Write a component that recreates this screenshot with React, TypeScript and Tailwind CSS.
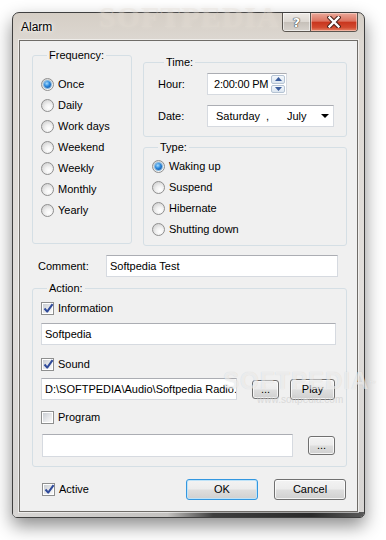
import React from 'react';

const Radio: React.FC<{ label: string; checked?: boolean }> = ({ label, checked }) => (
  <div className="flex h-[21px] items-center gap-[4px]">
    <span className="flex h-[13px] w-[13px] shrink-0 items-center justify-center rounded-full border border-[#8f8f8f] bg-[radial-gradient(circle_at_62%_68%,#ffffff_0%,#f2f2f2_35%,#c6c6c6_100%)]">
      {checked && (
        <span className="h-[7px] w-[7px] rounded-full bg-[radial-gradient(circle_at_40%_35%,#a6dcff_0%,#2b89dd_45%,#0a3e8a_100%)] shadow-[0_0_0_1px_#86b8de]" />
      )}
    </span>
    <span>{label}</span>
  </div>
);

const CheckBox: React.FC<{ label: string; checked?: boolean }> = ({ label, checked }) => (
  <div className="flex h-[20px] items-center gap-[4px]">
    <span className="relative h-[13px] w-[13px] shrink-0 border border-[#8e8f8f] bg-white p-[1px]">
      <span className="block h-full w-full bg-[linear-gradient(135deg,#c9cdd3_0%,#e9eaec_60%,#f8f8f8_100%)]" />
      {checked && (
        <svg className="absolute left-[1px] top-[0px]" width="11" height="11" viewBox="0 0 11 11">
          <path d="M1.5 5.5 L4.2 8.6 L9.6 1.2" fill="none" stroke="#2f4a9a" strokeWidth="2" strokeLinejoin="round" />
        </svg>
      )}
    </span>
    <span>{label}</span>
  </div>
);

const TextBox: React.FC<{ className?: string; value?: string }> = ({ className = '', value }) => (
  <div
    className={`flex items-center overflow-hidden whitespace-nowrap border border-[#d6dae0] border-t-[#abadb3] bg-white pl-[3px] ${className}`}
  >
    {value}
  </div>
);

const Button: React.FC<{ className?: string; children: React.ReactNode; focused?: boolean }> = ({
  className = '',
  children,
  focused,
}) => (
  <div
    className={`flex items-center justify-center rounded-[3px] border bg-[linear-gradient(to_bottom,#f3f3f3_0%,#ececec_48%,#dedede_52%,#d0d0d0_100%)] ${
      focused
        ? 'border-[#3397e0] shadow-[inset_0_0_0_1px_#bfe3f8]'
        : 'border-[#707070] shadow-[inset_0_0_0_1px_rgba(255,255,255,0.75)]'
    } ${className}`}
  >
    {children}
  </div>
);

const GroupBox: React.FC<{ title: string; className?: string; children: React.ReactNode }> = ({
  title,
  className = '',
  children,
}) => (
  <fieldset className={`rounded-[3px] border border-[#d5dfe5] ${className}`}>
    <legend className="ml-[6px] px-[2px] leading-[13px]">{title}</legend>
    {children}
  </fieldset>
);

const SpinArrow: React.FC<{ up?: boolean }> = ({ up }) => (
  <span className="flex flex-1 items-center justify-center rounded-[2px] border border-[#b5c3d3] bg-[linear-gradient(to_bottom,#f4f8fc,#dbe5f0)]">
    <svg width="7" height="4" viewBox="0 0 7 4">
      <path d={up ? 'M0 4 L3.5 0 L7 4 Z' : 'M0 0 L3.5 4 L7 0 Z'} fill="#3b5d9c" />
    </svg>
  </span>
);

export default function App() {
  return (
    <div className="min-h-[540px] bg-white p-[12px] font-['Liberation_Sans',Arial,sans-serif] text-[11px] leading-[13px] text-black">
      {/* window frame */}
      <div className="relative flex h-[506px] w-[353px] flex-col rounded-t-[7px] rounded-b-[5px] border border-[#3f3f3f] bg-[linear-gradient(to_bottom,#d5cec5_0px,#ddd8d2_30px,#e1dedb_55%,#d6d4d2_100%)] shadow-[0_8px_18px_rgba(0,0,0,0.45)]">
        {/* watermark in caption */}
        <div className="pointer-events-none absolute left-[86px] top-[-3px] font-['Liberation_Serif',serif] text-[30px] font-bold tracking-[1px] text-[#e4ddd4] opacity-40 [text-shadow:0_0_5px_#ebe5de]">
          SOFTPEDIA
        </div>

        {/* caption */}
        <div className="relative flex h-[27px] items-start pl-[8px] pr-[6px]">
          <span className="mt-[7px] text-[12px] leading-[14px] [text-shadow:0_0_6px_#fff,0_0_3px_#fff]">Alarm</span>
          <div className="ml-auto flex h-[19px] overflow-hidden rounded-b-[4px] border border-t-0 border-[#5b5650]">
            <div className="flex w-[28px] items-center justify-center border-r border-[#5b5650] bg-[linear-gradient(to_bottom,#eeeae6_0%,#dcd7d1_50%,#c6c0b9_51%,#d7d2cc_100%)] shadow-[inset_0_0_0_1px_rgba(255,255,255,0.55)]">
              <span className="font-['DejaVu_Sans',sans-serif] text-[13px] font-bold leading-[13px] text-white [text-shadow:0_0_1px_#3d3d3d,0_0_1px_#3d3d3d,0_0_1px_#3d3d3d]">
                ?
              </span>
            </div>
            <div className="flex w-[46px] items-center justify-center bg-[linear-gradient(to_bottom,#eaa99a_0%,#dc7360_45%,#c9361e_52%,#d24a2f_80%,#e6866a_100%)] shadow-[inset_0_0_0_1px_rgba(255,230,220,0.5)]">
              <svg width="14" height="12" viewBox="0 0 14 12">
                <path d="M2.5 1.5 L11.5 10.5 M11.5 1.5 L2.5 10.5" stroke="#4a2119" strokeWidth="4.4" strokeLinecap="square" />
                <path d="M2.5 1.5 L11.5 10.5 M11.5 1.5 L2.5 10.5" stroke="#ffffff" strokeWidth="2.4" strokeLinecap="square" />
              </svg>
            </div>
          </div>
        </div>

        {/* client area */}
        <div className="flex px-[6px]">
          <div className="relative h-[472px] w-[339px] border border-[#6f6c68] bg-[#f0f0f0] pl-[12px] pt-[8px] shadow-[0_0_0_1px_rgba(255,255,255,0.55)]">
            {/* top section */}
            <div className="flex items-start">
              <GroupBox title="Frequency:" className="h-[195px] w-[100px] pl-[8px] pt-[12px]">
                <Radio label="Once" checked />
                <Radio label="Daily" />
                <Radio label="Work days" />
                <Radio label="Weekend" />
                <Radio label="Weekly" />
                <Radio label="Monthly" />
                <Radio label="Yearly" />
              </GroupBox>

              <div className="ml-[11px] mt-[7px] flex w-[204px] flex-col">
                <GroupBox title="Time:" className="h-[81px] pl-[14px] pt-[4px]">
                  <div className="flex h-[22px] items-center">
                    <span className="w-[49px]">Hour:</span>
                    <div className="flex h-[22px] w-[80px] border border-[#d6dae0] border-t-[#abadb3] bg-white">
                      <span className="flex flex-1 items-center whitespace-nowrap pl-[6px] tracking-[-0.2px]">2:00:00 PM</span>
                      <div className="flex w-[15px] shrink-0 flex-col gap-[1px] py-[1px] pr-[1px]">
                        <SpinArrow up />
                        <SpinArrow />
                      </div>
                    </div>
                  </div>
                  <div className="mt-[10px] flex h-[22px] items-center">
                    <span className="w-[49px]">Date:</span>
                    <div className="flex h-[22px] w-[127px] items-center border border-[#d6dae0] border-t-[#abadb3] bg-white pl-[8px]">
                      <span className="w-[50px]">Saturday</span>
                      <span className="w-[21px]">,</span>
                      <span className="w-[30px]">July</span>
                      <svg className="ml-auto mr-[4px]" width="8" height="4" viewBox="0 0 8 4">
                        <path d="M0 0 L8 0 L4 4 Z" fill="#000" />
                      </svg>
                    </div>
                  </div>
                </GroupBox>

                <GroupBox title="Type:" className="mt-[4px] h-[105px] pl-[8px] pt-[2px]">
                  <Radio label="Waking up" checked />
                  <Radio label="Suspend" />
                  <Radio label="Hibernate" />
                  <Radio label="Shutting down" />
                </GroupBox>
              </div>
            </div>

            {/* comment */}
            <div className="mt-[9px] flex h-[22px] items-center">
              <span className="ml-[6px] w-[68px]">Comment:</span>
              <TextBox className="h-[22px] w-[232px]" value="Softpedia Test" />
            </div>

            {/* action */}
            <GroupBox title="Action:" className="mt-[5px] h-[185px] w-[315px] pl-[8px] pr-[10px] pt-[3px]">
              <CheckBox label="Information" checked />
              <TextBox className="mt-[5px] h-[22px] w-full" value="Softpedia" />
              <div className="mt-[9px]">
                <CheckBox label="Sound" checked />
              </div>
              <div className="mt-[4px] flex h-[22px] items-center">
                <TextBox className="h-[22px] w-[196px]" value="D:\SOFTPEDIA\Audio\Softpedia Radio.mp3" />
                <Button className="ml-[15px] h-[19px] w-[27px]">...</Button>
                <Button className="ml-[11px] h-[21px] w-[45px]">Play</Button>
              </div>
              <div className="mt-[7px]">
                <CheckBox label="Program" />
              </div>
              <div className="mt-[7px] flex h-[23px] items-center">
                <TextBox className="ml-[1px] h-[23px] w-[251px]" />
                <Button className="ml-[15px] h-[19px] w-[27px]">...</Button>
              </div>
            </GroupBox>

            {/* bottom buttons */}
            <div className="mt-[12px] flex h-[20px] w-[314px] items-center">
              <div className="ml-[10px]">
                <CheckBox label="Active" checked />
              </div>
              <Button focused className="ml-auto h-[21px] w-[72px]">
                OK
              </Button>
              <Button className="ml-[16px] h-[21px] w-[72px]">Cancel</Button>
            </div>

            {/* watermark over the sound row */}
            <div className="pointer-events-none absolute left-[203px] top-[327px] flex flex-col items-center">
              <span className="text-[24px] font-bold leading-[26px] tracking-[1px] text-white/60 [text-shadow:0_0_1px_rgba(0,0,0,0.14)]">
                SOFTPEDIA<sup className="text-[7px]">™</sup>
              </span>
              <span className="text-[10px] leading-[11px] text-[#cfcfcf]/70">www.softpedia.com</span>
            </div>
          </div>
        </div>

        {/* bottom edge */}
        <div className="mt-auto h-[5px] rounded-b-[4px] bg-[linear-gradient(to_right,#d8d6d4_0%,#c4c2c0_44%,#3e3e3e_57%,#2a2a2a_85%,#5a5a5a_100%)]" />
      </div>
    </div>
  );
}
